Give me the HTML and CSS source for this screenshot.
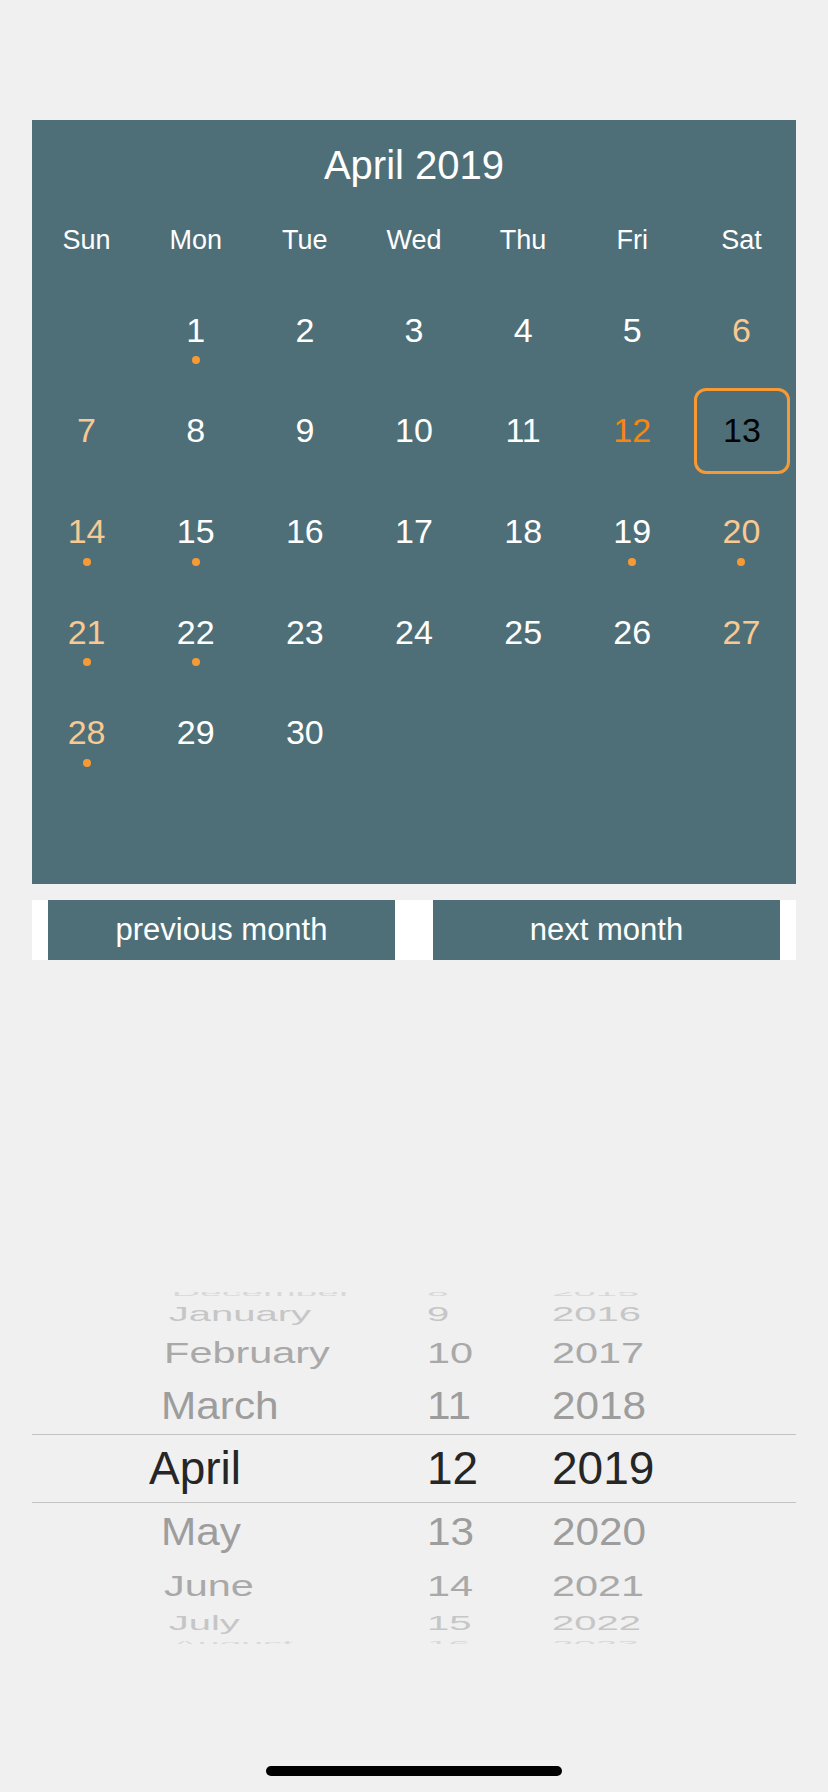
FILE: index.html
```html
<!DOCTYPE html>
<html lang="en">
<head>
<meta charset="utf-8">
<title>Calendar</title>
<link rel="stylesheet" href="styles.css">
</head>
<body>
<div class="page">
  <section class="calendar">
    <div class="cal-title">April 2019</div>
    <div class="weekdays">
      <span>Sun</span><span>Mon</span><span>Tue</span><span>Wed</span><span>Thu</span><span>Fri</span><span>Sat</span>
    </div>
    <div class="days">
      <div class="day"></div>
      <div class="day dot">1</div>
      <div class="day">2</div>
      <div class="day">3</div>
      <div class="day">4</div>
      <div class="day">5</div>
      <div class="day weekend">6</div>

      <div class="day weekend">7</div>
      <div class="day">8</div>
      <div class="day">9</div>
      <div class="day">10</div>
      <div class="day">11</div>
      <div class="day today">12</div>
      <div class="day selected">13</div>

      <div class="day weekend dot">14</div>
      <div class="day dot">15</div>
      <div class="day">16</div>
      <div class="day">17</div>
      <div class="day">18</div>
      <div class="day dot">19</div>
      <div class="day weekend dot">20</div>

      <div class="day weekend dot">21</div>
      <div class="day dot">22</div>
      <div class="day">23</div>
      <div class="day">24</div>
      <div class="day">25</div>
      <div class="day">26</div>
      <div class="day weekend">27</div>

      <div class="day weekend dot">28</div>
      <div class="day">29</div>
      <div class="day">30</div>
      <div class="day"></div>
      <div class="day"></div>
      <div class="day"></div>
      <div class="day"></div>
    </div>
  </section>

  <div class="btnbar">
    <button class="btn">previous month</button>
    <button class="btn">next month</button>
  </div>

  <div class="picker">
    <div class="prow l4"><span class="m">December</span><span class="d">8</span><span class="y">2015</span></div>
    <div class="prow l3"><span class="m">January</span><span class="d">9</span><span class="y">2016</span></div>
    <div class="prow l2"><span class="m">February</span><span class="d">10</span><span class="y">2017</span></div>
    <div class="prow l1"><span class="m">March</span><span class="d">11</span><span class="y">2018</span></div>
    <div class="prow l0"><span class="m">April</span><span class="d">12</span><span class="y">2019</span></div>
    <div class="prow l1"><span class="m">May</span><span class="d">13</span><span class="y">2020</span></div>
    <div class="prow l2"><span class="m">June</span><span class="d">14</span><span class="y">2021</span></div>
    <div class="prow l3"><span class="m">July</span><span class="d">15</span><span class="y">2022</span></div>
    <div class="prow l4"><span class="m">August</span><span class="d">16</span><span class="y">2023</span></div>
  </div>

  <div class="home-indicator"></div>
</div>
</body>
</html>
```
FILE: styles.css
```css
* { box-sizing: border-box; }

html, body {
  margin: 0;
  padding: 0;
  background: #f0f0f0;
  font-family: "Liberation Sans", Arial, sans-serif;
}

.page {
  width: 828px;
  height: 1792px;
  padding: 120px 32px 0;
  overflow: hidden;
}

/* Calendar */
.calendar {
  height: 764px;
  background: #4f6f78;
  display: flex;
  flex-direction: column;
  color: #ffffff;
}

.cal-title {
  height: 90px;
  display: flex;
  align-items: center;
  justify-content: center;
  font-size: 40px;
}

.weekdays {
  height: 60px;
  display: grid;
  grid-template-columns: repeat(7, 1fr);
  align-items: center;
  text-align: center;
  font-size: 27px;
}

.days {
  flex: 1;
  margin-top: 10px;
  display: grid;
  grid-template-columns: repeat(7, 1fr);
  grid-template-rows: repeat(6, 1fr);
}

.day {
  position: relative;
  display: flex;
  align-items: center;
  justify-content: center;
  font-size: 34px;
  color: #ffffff;
}

.day.weekend { color: #f8c992; }
.day.today { color: #f5870f; }

.day.selected {
  color: #000000;
  margin: 7px 6px 7px 7px;
  border: 3px solid #f79a35;
  border-radius: 12px;
}

.day.dot::after {
  content: "";
  position: absolute;
  left: 50%;
  top: calc(50% + 26px);
  width: 8px;
  height: 8px;
  margin-left: -4px;
  border-radius: 50%;
  background: #f79a35;
}

/* Buttons */
.btnbar {
  margin-top: 16px;
  height: 60px;
  background: #ffffff;
  padding: 0 16px;
  display: flex;
  gap: 38px;
}

.btn {
  flex: 1;
  border: 0;
  margin: 0;
  padding: 0;
  background: #4f6f78;
  color: #ffffff;
  font-family: "Liberation Sans", Arial, sans-serif;
  font-size: 31px;
}

/* Picker */
.picker {
  margin-top: 332px;
  height: 352px;
  overflow: hidden;
  display: flex;
  flex-direction: column;
  justify-content: center;
}

.prow {
  flex: none;
  display: grid;
  grid-template-columns: 278px 125px 1fr;
  grid-template-rows: 100%;
  padding-left: 117px;
  font-size: 46px;
}

.prow span {
  display: flex;
  align-items: center;
  height: 100%;
  min-height: 0;
  line-height: 46px;
  white-space: nowrap;
}

.prow .m { transform-origin: 151px 50%; }
.prow .d { transform-origin: 0 50%; }
.prow .y { transform-origin: 0 50%; }

.l0 {
  height: 69px;
  color: #262626;
  border-top: 1px solid #c3c3c3;
  border-bottom: 1px solid #c3c3c3;
}

.l1 { height: 57px; color: #9d9d9d; }
.l2 { height: 50px; color: #a9a9a9; }
.l3 { height: 26px; color: #c6c6c6; }
.l4 { height: 16px; color: #d8d8d8; }

.l1 span { transform: scale(0.92, 0.83); }
.l2 span { transform: scale(0.90, 0.66); }
.l3 span { transform: scale(0.87, 0.42); }
.l4 span { transform: scale(0.85, 0.2); }

/* Home indicator */
.home-indicator {
  margin: 122px 0 0 234px;
  width: 296px;
  height: 10px;
  border-radius: 5px;
  background: #000000;
}
```
